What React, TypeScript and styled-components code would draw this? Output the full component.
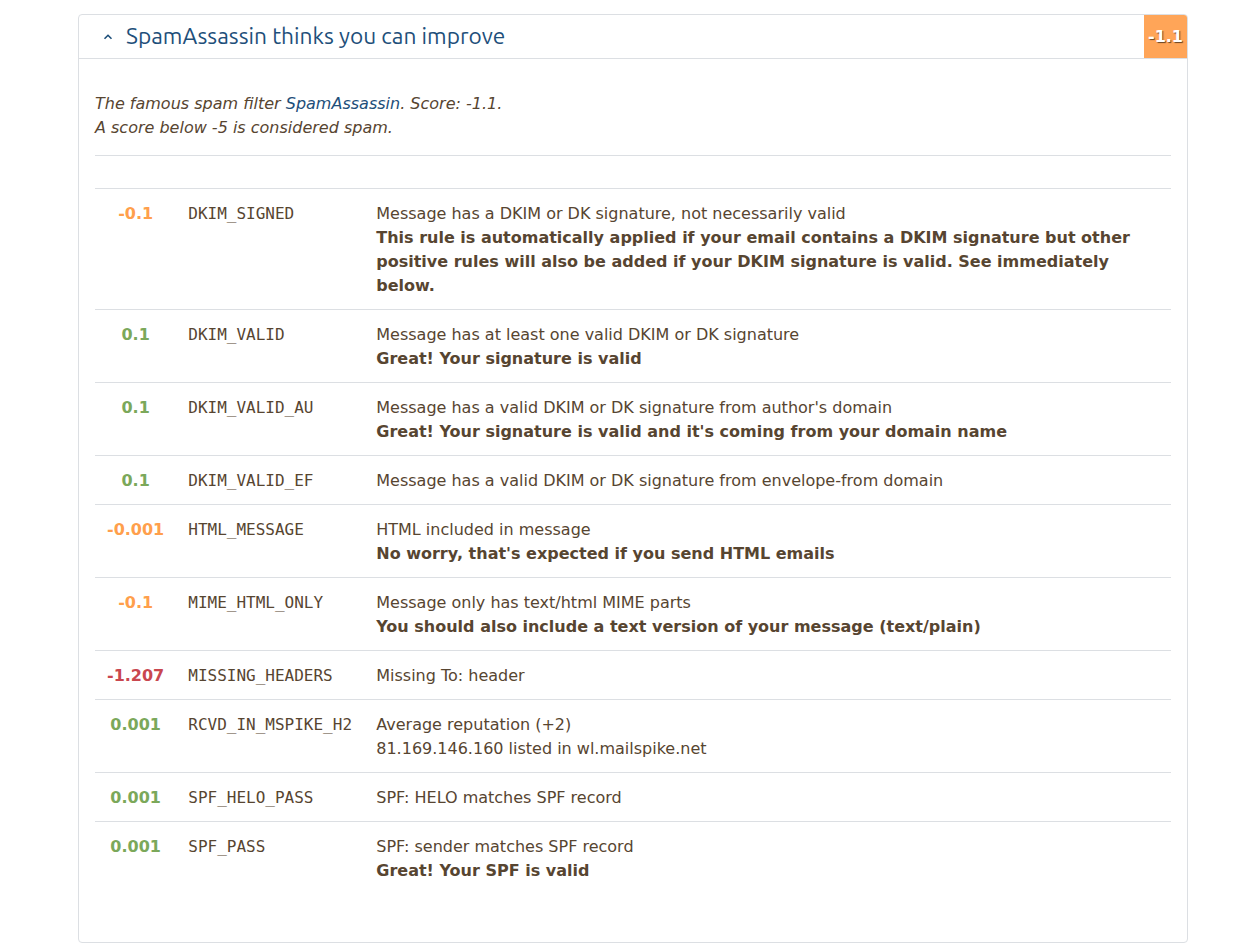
import React, { useState } from "react";
import styled, { createGlobalStyle } from "styled-components";

type Rule = {
  score: string;
  name: string;
  desc: string;
  note?: string;
  extra?: string;
};

const rules: Rule[] = [
  {
    score: "-0.1",
    name: "DKIM_SIGNED",
    desc: "Message has a DKIM or DK signature, not necessarily valid",
    note:
      "This rule is automatically applied if your email contains a DKIM signature but other positive rules will also be added if your DKIM signature is valid. See immediately below.",
  },
  {
    score: "0.1",
    name: "DKIM_VALID",
    desc: "Message has at least one valid DKIM or DK signature",
    note: "Great! Your signature is valid",
  },
  {
    score: "0.1",
    name: "DKIM_VALID_AU",
    desc: "Message has a valid DKIM or DK signature from author's domain",
    note: "Great! Your signature is valid and it's coming from your domain name",
  },
  {
    score: "0.1",
    name: "DKIM_VALID_EF",
    desc: "Message has a valid DKIM or DK signature from envelope-from domain",
  },
  {
    score: "-0.001",
    name: "HTML_MESSAGE",
    desc: "HTML included in message",
    note: "No worry, that's expected if you send HTML emails",
  },
  {
    score: "-0.1",
    name: "MIME_HTML_ONLY",
    desc: "Message only has text/html MIME parts",
    note: "You should also include a text version of your message (text/plain)",
  },
  {
    score: "-1.207",
    name: "MISSING_HEADERS",
    desc: "Missing To: header",
  },
  {
    score: "0.001",
    name: "RCVD_IN_MSPIKE_H2",
    desc: "Average reputation (+2)",
    extra: "81.169.146.160 listed in wl.mailspike.net",
  },
  {
    score: "0.001",
    name: "SPF_HELO_PASS",
    desc: "SPF: HELO matches SPF record",
  },
  {
    score: "0.001",
    name: "SPF_PASS",
    desc: "SPF: sender matches SPF record",
    note: "Great! Your SPF is valid",
  },
];

function scoreTone(score: string): "good" | "warn" | "bad" {
  const v = parseFloat(score);
  if (v > 0) return "good";
  if (v <= -1) return "bad";
  return "warn";
}

export default function App() {
  const [open, setOpen] = useState(true);

  return (
    <>
      <GlobalStyle />
      <Page>
        <Card>
          <Header onClick={() => setOpen(!open)}>
            <Caret $open={open}>
              <svg width="10" height="10" viewBox="0 0 10 10">
                <path
                  d="M1.5 6.8 L5 3.3 L8.5 6.8"
                  fill="none"
                  stroke="currentColor"
                  strokeWidth="1.6"
                />
              </svg>
            </Caret>
            <Title>SpamAssassin thinks you can improve</Title>
            <Badge>-1.1</Badge>
          </Header>
          {open && (
            <Body>
              <Intro>
                The famous spam filter <Link href="#">SpamAssassin</Link>. Score:
                -1.1.
                <br />
                A score below -5 is considered spam.
              </Intro>
              <Rule />
              <Table>
                <tbody>
                  {rules.map((r) => (
                    <Row key={r.name}>
                      <ScoreCell $tone={scoreTone(r.score)}>{r.score}</ScoreCell>
                      <NameCell>{r.name}</NameCell>
                      <DescCell>
                        {r.desc}
                        {r.extra && (
                          <>
                            <br />
                            {r.extra}
                          </>
                        )}
                        {r.note && <Note>{r.note}</Note>}
                      </DescCell>
                    </Row>
                  ))}
                </tbody>
              </Table>
            </Body>
          )}
        </Card>
      </Page>
    </>
  );
}

const GlobalStyle = createGlobalStyle`
  body {
    margin: 0;
    background: #fff;
    color: #574531;
    font-family: "DejaVu Sans", sans-serif;
  }
`;

const Page = styled.div`
  padding: 14px 52px 6px 78px;
`;

const Card = styled.div`
  border: 1px solid #dcdfe3;
  border-radius: 4px;
  background: #fff;
  overflow: hidden;
`;

const Header = styled.div`
  display: flex;
  align-items: center;
  height: 43px;
  border-bottom: 1px solid #dcdfe3;
  padding-left: 24px;
  cursor: pointer;
`;

const Caret = styled.span<{ $open: boolean }>`
  display: inline-flex;
  color: #1e4f7a;
  margin-right: 13px;
  transform: rotate(${(p) => (p.$open ? 0 : 180)}deg);
`;

const Title = styled.h2`
  flex: 1;
  margin: 0 0 2px;
  font-family: "Ubuntu", "Open Sans", sans-serif;
  font-weight: 400;
  font-size: 22.7px;
  color: #1e4f7a;
`;

const Badge = styled.span`
  align-self: stretch;
  width: 43px;
  display: flex;
  align-items: center;
  justify-content: center;
  background: #ffa558;
  color: #fff;
  font-weight: bold;
  font-size: 16px;
  text-shadow: 1px 1px 1px rgba(0, 0, 0, 0.6);
`;

const Body = styled.div`
  padding: 33px 16px 48px;
`;

const Intro = styled.p`
  margin: 0 0 15px;
  font-style: italic;
  font-size: 16px;
  line-height: 24px;
`;

const Link = styled.a`
  color: #1e4f7a;
  text-decoration: none;
`;

const Rule = styled.hr`
  border: 0;
  border-top: 1px solid #dcdfe3;
  margin: 0 0 32px;
`;

const Table = styled.table`
  width: 100%;
  border-collapse: collapse;
  font-size: 16px;
  line-height: 24px;
`;

const Row = styled.tr`
  border-top: 1px solid #dcdfe3;
`;

const Cell = styled.td`
  padding: 13px 12px 11px;
  vertical-align: top;
`;

const toneColors = {
  good: "#7ba85a",
  warn: "#ff9f4c",
  bad: "#c9474f",
};

const ScoreCell = styled(Cell)<{ $tone: "good" | "warn" | "bad" }>`
  width: 57px;
  text-align: center;
  font-weight: bold;
  color: ${(p) => toneColors[p.$tone]};
`;

const NameCell = styled(Cell)`
  width: 164px;
  font-family: "DejaVu Sans Mono", monospace;
  font-size: 16px;
`;

const DescCell = styled(Cell)``;

const Note = styled.div`
  font-weight: bold;
`;
